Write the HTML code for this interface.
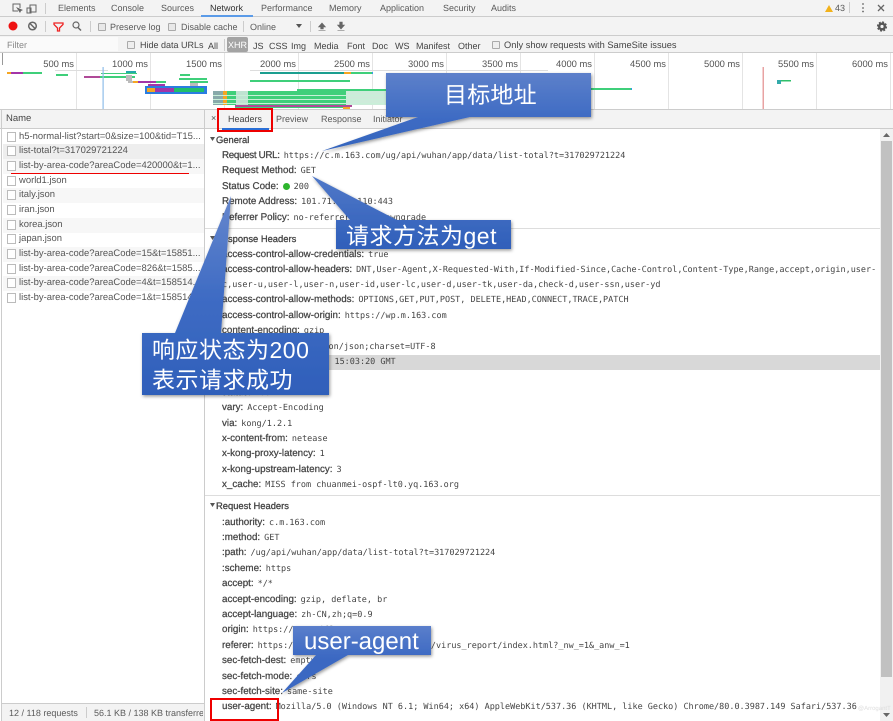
<!DOCTYPE html>
<html><head><meta charset="utf-8">
<style>
html,body{margin:0;padding:0;background:#fff}
#r{position:relative;width:893px;height:721px;overflow:hidden;background:#fff;font:9px "Liberation Sans",sans-serif;color:#555;filter:blur(.3px);text-rendering:geometricPrecision}
#r div,#r span.a{position:absolute;white-space:nowrap}
.t{color:#5a5a5a;line-height:14px;height:14px}
.l{left:222px;line-height:14px;height:14px;font-size:9.8px;color:#444;-webkit-text-stroke:.25px #444}
.l b{font:8.47px "DejaVu Sans Mono","Liberation Mono",monospace;color:#444;-webkit-text-stroke:0;margin-left:4px;letter-spacing:0}
.h{left:216px;line-height:14px;height:14px;font-size:9.4px;color:#444;-webkit-text-stroke:.3px #444}
.n{left:19px;line-height:16px;height:16px;font-size:9.45px;color:#555}
.ic{left:7px;width:7px;height:8px;background:#fff;border:1px solid #bbb}
.rw{left:3px;width:201px;height:15px}
.cb{width:6px;height:6px;background:#e8e8e8;border:1px solid #aaa;border-radius:1px}
.sp{width:1px;background:#ccc}
.ms{top:58px;line-height:12px;font-size:9.4px;color:#555;text-align:right;width:60px}
.g{top:53px;width:1px;height:56px;background:#e4e4e4}
.call{color:#fff;font-family:"Liberation Sans","Noto Sans CJK SC",sans-serif;font-size:23px;z-index:5;line-height:27px}
</style></head><body>
<div id="r">
<!-- top tab bar -->
<div style="left:0;top:0;width:893px;height:16px;background:#f3f3f3;border-bottom:1px solid #ccc"></div>
<svg style="position:absolute;left:0;top:0" width="893" height="53" fill="none" stroke="#666">
<path d="M18 11H13V4h7v4" stroke-width="1"/><path d="M16 7l4 6 1-2 2-1z" fill="#666" stroke="none"/>
<path d="M30 5h6v7h-6zM27 8h4v5h-4z" stroke-width="1"/>
<circle cx="13" cy="26" r="4.5" fill="#e11" stroke="none"/>
<circle cx="32.500" cy="26" r="3.800" stroke-width="1.500"/><path d="M30 23.500l5 5" stroke-width="1.500"/>
<path d="M54 23h9v1.500l-3.500 3.500v3h-2v-3L54 24.500z" stroke="#e22" stroke-width="1.300"/>
<circle cx="76" cy="25" r="3" stroke-width="1.200"/><path d="M78 27.500l3 3" stroke-width="1.500"/>
<path d="M322 23l-3.500 4h2.200v2h2.600v-2h2.200zM318.500 30.500h7" fill="#666" stroke="#666" stroke-width=".6"/>
<path d="M341 29l-3.500-4h2.200v-3h2.600v3h2.200zM337.500 30.500h7" fill="#666" stroke="#666" stroke-width=".6"/>
<path d="M296 24h6l-3 4z" fill="#555" stroke="none"/>
<circle cx="882" cy="26.500" r="2.800" stroke="#555" stroke-width="2.400"/>
<circle cx="882" cy="26.500" r="4.400" stroke="#555" stroke-width="1.400" stroke-dasharray="2 1.450"/>
<path d="M825 12l4-7 4 7z" fill="#f2b21b" stroke="none"/>
<circle cx="863" cy="4" r=".9" fill="#666" stroke="none"/><circle cx="863" cy="8" r=".9" fill="#666" stroke="none"/><circle cx="863" cy="11.500" r=".9" fill="#666" stroke="none"/>
<path d="M878 5l6 6M884 5l-6 6" stroke-width="1.300"/>
</svg>
<div class="sp" style="left:45px;top:3px;height:11px"></div>
<div class="t" style="left:58px;top:1px">Elements</div>
<div class="t" style="left:111px;top:1px">Console</div>
<div class="t" style="left:161px;top:1px">Sources</div>
<div class="t" style="left:210px;top:1px;color:#333">Network</div>
<div style="left:201px;top:15px;width:52px;height:1.500px;background:#5b9be8"></div>
<div class="t" style="left:261px;top:1px">Performance</div>
<div class="t" style="left:329px;top:1px">Memory</div>
<div class="t" style="left:380px;top:1px">Application</div>
<div class="t" style="left:443px;top:1px">Security</div>
<div class="t" style="left:491px;top:1px">Audits</div>
<div class="t" style="left:835px;top:1px">43</div>
<div class="sp" style="left:849px;top:2px;height:11px"></div>
<!-- toolbar -->
<div style="left:0;top:17px;width:893px;height:18px;background:#f3f3f3;border-bottom:1px solid #ccc;z-index:-1"></div>
<div class="sp" style="left:45px;top:21px;height:11px"></div>
<div class="sp" style="left:90px;top:21px;height:11px"></div>
<div class="cb" style="left:98px;top:23px"></div>
<div class="t" style="left:110px;top:20px">Preserve log</div>
<div class="cb" style="left:168px;top:23px"></div>
<div class="t" style="left:181px;top:20px">Disable cache</div>
<div class="sp" style="left:243px;top:21px;height:11px"></div>
<div class="t" style="left:250px;top:20px">Online</div>
<div class="sp" style="left:310px;top:21px;height:11px"></div>
<!-- filter row -->
<div style="left:0;top:36px;width:893px;height:16px;background:#f3f3f3;border-bottom:1px solid #ccc;z-index:-1"></div>
<div style="left:0;top:37px;width:118px;height:14px;background:#fafafa"></div>
<div class="t" style="left:7px;top:38px;color:#888">Filter</div>
<div class="cb" style="left:127px;top:41px;background:#eee"></div>
<div class="t" style="left:140px;top:38px;color:#444">Hide data URLs</div>
<div class="t" style="left:208px;top:39px;color:#444">All</div>
<div class="sp" style="left:224px;top:39px;height:12px"></div>
<div style="left:227px;top:37px;width:21px;height:15px;background:#a3a3a3;border-radius:2px;color:#fff;line-height:17px;text-align:center">XHR</div>
<div class="t" style="left:253px;top:39px;color:#444">JS</div>
<div class="t" style="left:269px;top:39px;color:#444">CSS</div>
<div class="t" style="left:291px;top:39px;color:#444">Img</div>
<div class="t" style="left:314px;top:39px;color:#444">Media</div>
<div class="t" style="left:347px;top:39px;color:#444">Font</div>
<div class="t" style="left:372px;top:39px;color:#444">Doc</div>
<div class="t" style="left:395px;top:39px;color:#444">WS</div>
<div class="t" style="left:416px;top:39px;color:#444">Manifest</div>
<div class="t" style="left:458px;top:39px;color:#444">Other</div>
<div class="cb" style="left:492px;top:41px;background:#eee"></div>
<div class="t" style="left:504px;top:38px;color:#444;font-size:9.3px">Only show requests with SameSite issues</div>
<!-- overview -->
<div class="g" style="left:76px"></div><div class="g" style="left:150px"></div><div class="g" style="left:224px"></div><div class="g" style="left:298px"></div><div class="g" style="left:372px"></div><div class="g" style="left:446px"></div><div class="g" style="left:520px"></div><div class="g" style="left:594px"></div><div class="g" style="left:668px"></div><div class="g" style="left:742px"></div><div class="g" style="left:816px"></div><div class="g" style="left:890px"></div>
<div class="ms" style="left:14px">500 ms</div><div class="ms" style="left:88px">1000 ms</div><div class="ms" style="left:162px">1500 ms</div><div class="ms" style="left:236px">2000 ms</div><div class="ms" style="left:310px">2500 ms</div><div class="ms" style="left:384px">3000 ms</div><div class="ms" style="left:458px">3500 ms</div><div class="ms" style="left:532px">4000 ms</div><div class="ms" style="left:606px">4500 ms</div><div class="ms" style="left:680px">5000 ms</div><div class="ms" style="left:754px">5500 ms</div><div class="ms" style="left:828px">6000 ms</div>
<div style="left:2px;top:53px;width:1px;height:12px;background:#999"></div>
<svg style="position:absolute;left:0;top:53px" width="893" height="56">
<g shape-rendering="crispEdges">
<rect x="55" y="17" width="53" height="1" fill="#ddd"/><rect x="250" y="17" width="178" height="1" fill="#ddd"/><rect x="428" y="17" width="120" height="1" fill="#ddd"/>
<rect x="7" y="19" width="4" height="2" fill="#f5a623"/><rect x="11" y="19" width="12" height="2" fill="#a335a8"/><rect x="23" y="19" width="19" height="2" fill="#3fcf7a"/>
<rect x="56" y="21" width="12" height="2" fill="#3fcf7a"/>
<rect x="84" y="23" width="16" height="2" fill="#b04a98"/><rect x="100" y="23" width="35" height="2" fill="#3fcf7a"/>
<rect x="101" y="20" width="36" height="1" fill="#3fcf7a"/><rect x="126" y="18" width="10" height="2" fill="#2aa"/>
<rect x="126" y="22" width="6" height="6" fill="#bbb"/><rect x="128" y="28" width="8" height="2" fill="#bbb"/>
<rect x="133" y="28" width="5" height="2" fill="#f5a623"/><rect x="138" y="28" width="18" height="2" fill="#a335a8"/><rect x="156" y="28" width="10" height="2" fill="#3fcf7a"/>
<rect x="180" y="21" width="10" height="2" fill="#3fcf7a"/><rect x="179" y="25" width="28" height="2" fill="#3fcf7a"/><rect x="190" y="28" width="18" height="2" fill="#3fcf7a"/><rect x="190" y="30" width="8" height="3" fill="#bbb"/>
<rect x="148" y="31" width="17" height="2" fill="#a335a8"/>
<rect x="145" y="33" width="62" height="8" fill="#2a7de1"/><rect x="147" y="35" width="8" height="4" fill="#f5a623"/><rect x="155" y="35" width="19" height="4" fill="#a335a8"/><rect x="174" y="35" width="30" height="4" fill="#1fbf6a"/>
<rect x="250" y="27" width="100" height="2" fill="#3fcf7a"/>
<rect x="260" y="19" width="84" height="2" fill="#1b9e8f"/><rect x="344" y="19" width="7" height="2" fill="#f5a623"/><rect x="351" y="19" width="21" height="2" fill="#3fcf7a"/><rect x="372" y="19" width="1" height="2" fill="#39e"/>
<rect x="213" y="38" width="173" height="14" fill="#3fcf7a"/><rect x="297" y="36" width="89" height="2" fill="#3fcf7a"/>
<rect x="213" y="38" width="10" height="14" fill="#8aa"/><rect x="223" y="38" width="4" height="14" fill="#f5a623"/>
<rect x="236" y="38" width="12" height="14" fill="#bfe3d2"/>
<rect x="346" y="38" width="42" height="14" fill="#cdebda"/>
<rect x="213" y="42" width="173" height="1" fill="#c8f0d8"/><rect x="213" y="46" width="173" height="1" fill="#c8f0d8"/><rect x="213" y="50" width="173" height="1" fill="#c8f0d8"/>
<rect x="235" y="52" width="117" height="2" fill="#b04a98"/><rect x="235" y="54" width="115" height="1" fill="#3fcf7a"/><rect x="343" y="54" width="7" height="2" fill="#f5a623"/>
<rect x="591" y="35" width="40" height="2" fill="#3fcf7a"/><rect x="631" y="35" width="1" height="2" fill="#39e"/>
<rect x="777" y="27" width="14" height="1.500" fill="#2fbf6a"/><rect x="777" y="27" width="4" height="4" fill="#3aa"/>
</g>
<rect x="102.500" y="14" width="1.200" height="42" fill="#8fbdea"/>
<rect x="762.500" y="14" width="1.500" height="42" fill="#e8a3a3"/>
</svg>
<div style="left:0;top:109px;width:893px;height:1px;background:#ccc"></div>
<!-- name column header -->
<div style="left:0;top:110px;width:204px;height:18px;background:#f3f3f3;border-bottom:1px solid #ccc"></div>
<div style="left:205px;top:110px;width:688px;height:18px;background:#f3f3f3;border-bottom:1px solid #ccc"></div>
<div style="left:1px;top:110px;width:1px;height:611px;background:#ccc"></div>
<div style="left:204px;top:110px;width:1px;height:611px;background:#ccc"></div>
<div class="t" style="left:6px;top:112px;color:#444;font-size:9.5px">Name</div>
<div class="t" style="left:211px;top:111px;color:#555">×</div>
<div class="t" style="left:228px;top:112px;color:#444">Headers</div>
<div style="left:222px;top:128px;width:47px;height:1.500px;background:#2a6fd6"></div>
<div class="t" style="left:276px;top:112px">Preview</div>
<div class="t" style="left:321px;top:112px">Response</div>
<div class="t" style="left:373px;top:112px">Initiator</div>
<!-- list -->
<div class="rw" style="top:144px;background:#eee"></div>
<div class="rw" style="top:159px;background:#f7f7f7"></div>
<div class="rw" style="top:188px;background:#f7f7f7"></div>
<div class="rw" style="top:218px;background:#f7f7f7"></div>
<div class="rw" style="top:247px;background:#f7f7f7"></div>
<div class="rw" style="top:276px;background:#f7f7f7"></div>
<div class="ic" style="top:132px"></div><div class="n" style="top:129px">h5-normal-list?start=0&amp;size=100&amp;tid=T15...</div>
<div class="ic" style="top:146px"></div><div class="n" style="top:143px">list-total?t=317029721224</div>
<div class="ic" style="top:161px"></div><div class="n" style="top:158px">list-by-area-code?areaCode=420000&amp;t=1...</div>
<div class="ic" style="top:176px"></div><div class="n" style="top:173px">world1.json</div>
<div class="ic" style="top:190px"></div><div class="n" style="top:187px">italy.json</div>
<div class="ic" style="top:205px"></div><div class="n" style="top:202px">iran.json</div>
<div class="ic" style="top:220px"></div><div class="n" style="top:217px">korea.json</div>
<div class="ic" style="top:234px"></div><div class="n" style="top:231px">japan.json</div>
<div class="ic" style="top:249px"></div><div class="n" style="top:246px">list-by-area-code?areaCode=15&amp;t=15851...</div>
<div class="ic" style="top:264px"></div><div class="n" style="top:261px">list-by-area-code?areaCode=826&amp;t=1585...</div>
<div class="ic" style="top:278px"></div><div class="n" style="top:275px">list-by-area-code?areaCode=4&amp;t=158514...</div>
<div class="ic" style="top:293px"></div><div class="n" style="top:290px">list-by-area-code?areaCode=1&amp;t=158514...</div>
<div style="left:11px;top:172.500px;width:178px;height:1.500px;background:#e00"></div>
<!-- status bar -->
<div style="left:2px;top:703px;width:202px;height:18px;background:#f3f3f3;border-top:1px solid #ccc"></div>
<div class="t" style="left:9px;top:706px">12 / 118 requests</div>
<div class="sp" style="left:86px;top:707px;height:11px"></div>
<div style="left:94px;top:706px;width:109px;overflow:hidden;line-height:14px;color:#5a5a5a">56.1 KB / 138 KB transferred</div>
<!-- scrollbar -->
<div style="left:880px;top:129px;width:13px;height:592px;background:#f1f1f1"></div>
<div style="left:881px;top:141px;width:11px;height:536px;background:#c1c1c1"></div>
<svg style="position:absolute;left:880px;top:129px" width="13" height="592"><path d="M3 8l3.500-4L10 8zM3 584l3.500 4 3.500-4z" fill="#666"/></svg>
<!-- headers -->
<div class="h" style="top:133px">General</div>
<div class="h" style="top:232px">Response Headers</div>
<div class="h" style="top:499px">Request Headers</div>
<svg style="position:absolute;left:209px;top:130px" width="8" height="380"><path d="M1 7h5l-2.500 4zM1 106h5l-2.500 4zM1 373h5l-2.500 4z" fill="#555"/></svg>
<div style="left:205px;top:228px;width:675px;height:1px;background:#ddd"></div>
<div style="left:205px;top:495px;width:675px;height:1px;background:#ddd"></div>
<div style="left:205px;top:355px;width:675px;height:15px;background:#d8d8d8"></div>
<div class="l" style="top:149px;letter-spacing:-.32px">Request URL:<b>https://c.m.163.com/ug/api/wuhan/app/data/list-total?t=317029721224</b></div>
<div class="l" style="top:164px">Request Method:<b>GET</b></div>
<div class="l" style="top:180px">Status Code:<span style="display:inline-block;width:7px;height:7px;border-radius:50%;background:#2db52d;margin:0 0 0 4px;vertical-align:-1px"></span><b>200</b></div>
<div class="l" style="top:195px">Remote Address:<b>101.71.146.110:443</b></div>
<div class="l" style="top:211px">Referrer Policy:<b>no-referrer-when-downgrade</b></div>
<div class="l" style="top:248px">access-control-allow-credentials:<b>true</b></div>
<div class="l" style="top:263px">access-control-allow-headers:<b>DNT,User-Agent,X-Requested-With,If-Modified-Since,Cache-Control,Content-Type,Range,accept,origin,user-</b></div>
<div class="l" style="top:278px"><b style="margin:0">c,user-u,user-l,user-n,user-id,user-lc,user-d,user-tk,user-da,check-d,user-ssn,user-yd</b></div>
<div class="l" style="top:293px">access-control-allow-methods:<b>OPTIONS,GET,PUT,POST, DELETE,HEAD,CONNECT,TRACE,PATCH</b></div>
<div class="l" style="top:309px">access-control-allow-origin:<b>https://wp.m.163.com</b></div>
<div class="l" style="top:324px">content-encoding:<b>gzip</b></div>
<div class="l" style="top:340px">content-type:<b>application/json;charset=UTF-8</b></div>
<div class="l" style="top:355px">date:<b>Tue, 24 Mar 2020 15:03:20 GMT</b></div>
<div class="l" style="top:371px">server:<b>nginx</b></div>
<div class="l" style="top:386px">status:<b>200</b></div>
<div class="l" style="top:401px">vary:<b>Accept-Encoding</b></div>
<div class="l" style="top:417px">via:<b>kong/1.2.1</b></div>
<div class="l" style="top:432px">x-content-from:<b>netease</b></div>
<div class="l" style="top:447px">x-kong-proxy-latency:<b>1</b></div>
<div class="l" style="top:463px">x-kong-upstream-latency:<b>3</b></div>
<div class="l" style="top:478px">x_cache:<b>MISS from chuanmei-ospf-lt0.yq.163.org</b></div>
<div class="l" style="top:516px">:authority:<b>c.m.163.com</b></div>
<div class="l" style="top:531px">:method:<b>GET</b></div>
<div class="l" style="top:546px">:path:<b>/ug/api/wuhan/app/data/list-total?t=317029721224</b></div>
<div class="l" style="top:562px">:scheme:<b>https</b></div>
<div class="l" style="top:577px">accept:<b>*/*</b></div>
<div class="l" style="top:593px">accept-encoding:<b>gzip, deflate, br</b></div>
<div class="l" style="top:608px">accept-language:<b>zh-CN,zh;q=0.9</b></div>
<div class="l" style="top:623px">origin:<b>https://wp.m.163.com</b></div>
<div class="l" style="top:639px">referer:<b>https://wp.m.163.com/163/page/news/virus_report/index.html?_nw_=1&amp;_anw_=1</b></div>
<div class="l" style="top:654px">sec-fetch-dest:<b>empty</b></div>
<div class="l" style="top:670px">sec-fetch-mode:<b>cors</b></div>
<div class="l" style="top:685px">sec-fetch-site:<b>same-site</b></div>
<div class="l" style="top:700px">user-agent:<b>Mozilla/5.0 (Windows NT 6.1; Win64; x64) AppleWebKit/537.36 (KHTML, like Gecko) Chrome/80.0.3987.149 Safari/537.36</b></div>
<!-- red boxes -->
<div style="left:217px;top:108px;width:52px;height:20px;border:2px solid #e00;z-index:6"></div>
<div style="left:210px;top:698px;width:65px;height:19px;border:2px solid #e00;z-index:6"></div>
<!-- callouts -->
<svg style="position:absolute;left:0;top:0;z-index:4" width="893" height="721">
<defs>
<linearGradient id="b" gradientUnits="userSpaceOnUse" x1="0" y1="73" x2="0" y2="151"><stop offset="0" stop-color="#5d80ca"/><stop offset=".55" stop-color="#3f6cc4"/><stop offset="1" stop-color="#3464bd"/></linearGradient>
<linearGradient id="c" gradientUnits="userSpaceOnUse" x1="0" y1="176" x2="0" y2="249"><stop offset="0" stop-color="#5078c8"/><stop offset="1" stop-color="#2f5fba"/></linearGradient>
<linearGradient id="d" gradientUnits="userSpaceOnUse" x1="0" y1="196" x2="0" y2="395"><stop offset="0" stop-color="#6687cd"/><stop offset=".5" stop-color="#3f6cc4"/><stop offset="1" stop-color="#2f5fba"/></linearGradient>
<linearGradient id="e" gradientUnits="userSpaceOnUse" x1="0" y1="626" x2="0" y2="693"><stop offset="0" stop-color="#5a7ecb"/><stop offset=".5" stop-color="#3a68c2"/><stop offset="1" stop-color="#3a68c2"/></linearGradient>
<filter id="s" x="-10%" y="-10%" width="120%" height="125%"><feDropShadow dx="1" dy="1.500" stdDeviation="1.500" flood-color="#000" flood-opacity=".4"/></filter></defs>
<polygon filter="url(#s)" fill="url(#b)" points="386,73 591,73 591,117 470,117 322,151 418,117 386,117"/>
<polygon filter="url(#s)" fill="url(#c)" points="312,176 397,220 511,220 511,249 336,249 336,220 350,220"/>
<polygon filter="url(#s)" fill="url(#d)" points="231,196 221,333 329,333 329,395 142,395 142,333 175,333"/>
<polygon filter="url(#s)" fill="url(#e)" points="293,626 431,626 431,655 348,655 282,693 316,655 293,655"/>
</svg>
<div class="call" style="left:444px;top:82px;letter-spacing:.2px">目标地址</div>
<div class="call" style="left:346px;top:223px;letter-spacing:.5px">请求方法为get</div>
<div class="call" style="left:152px;top:335px;line-height:30px;letter-spacing:.5px">响应状态为200<br>表示请求成功</div>
<div class="call" style="left:304px;top:628px;font-size:24px">user-agent</div>
<div style="left:858px;top:706px;font-size:6px;color:#ddd;z-index:3">@ArrogantT</div>
</div>
</body></html>
